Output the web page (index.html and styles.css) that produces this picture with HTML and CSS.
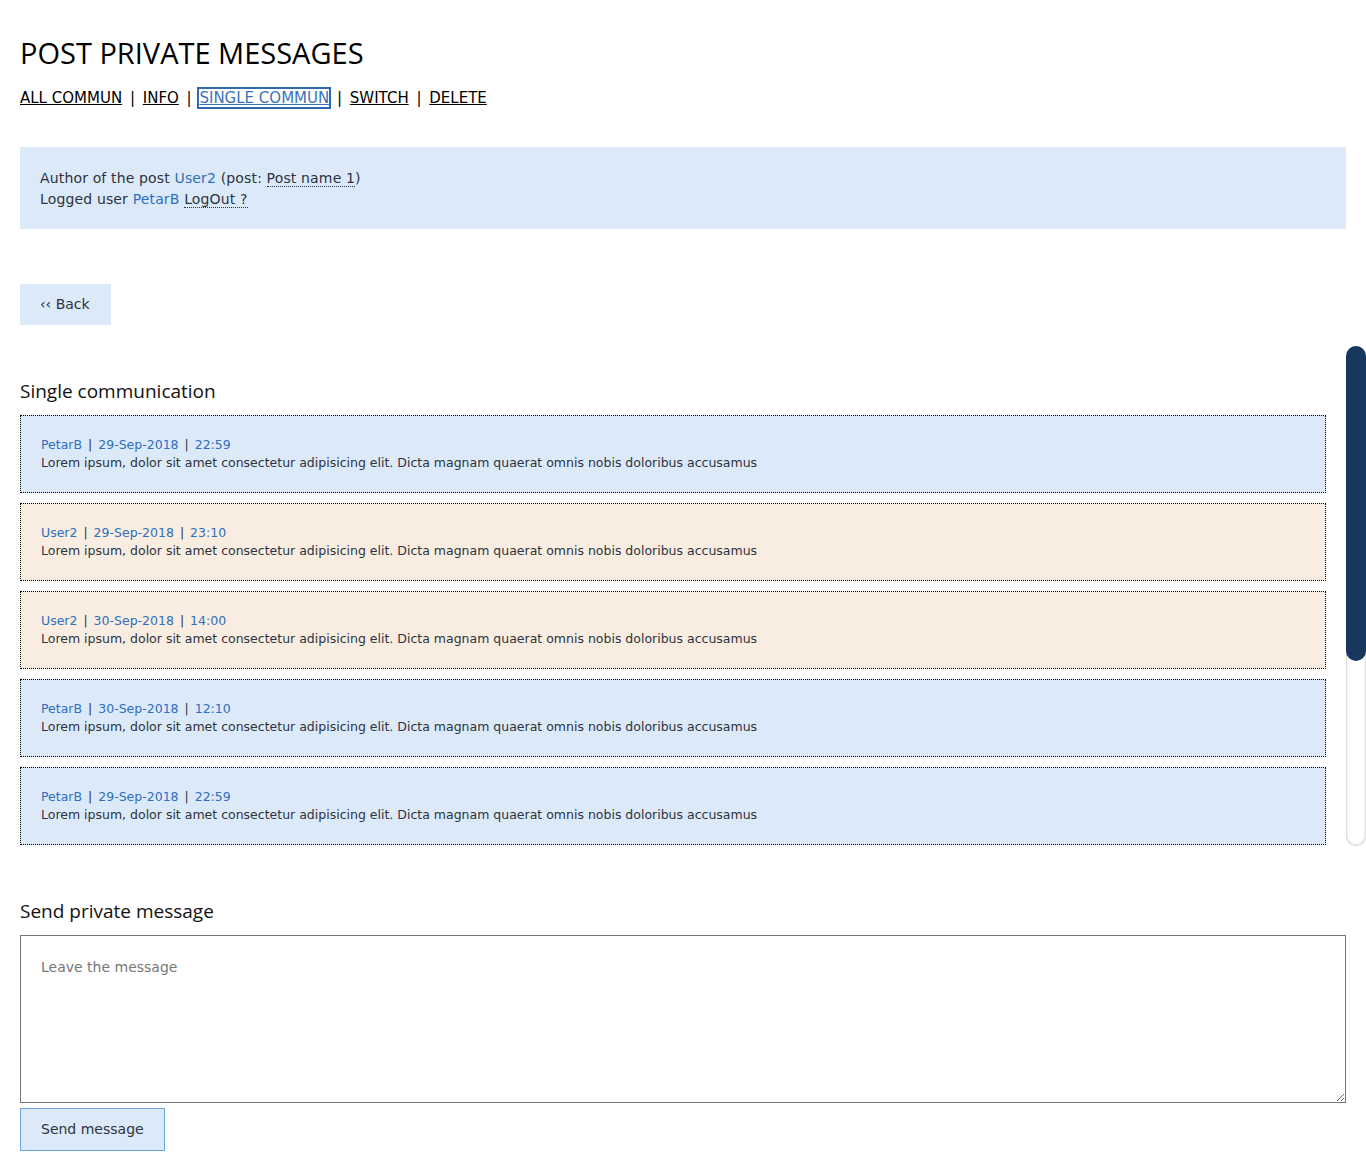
FILE: index.html
```html
<!DOCTYPE html>
<html lang="en">
<head>
<meta charset="utf-8">
<title>Post private messages</title>
<link rel="stylesheet" href="styles.css">
</head>
<body>
<header class="page-head">
  <h1 class="title">POST PRIVATE MESSAGES</h1>
  <nav class="nav">
    <a href="#" class="nav-link">ALL COMMUN</a> <span class="sep">|</span>
    <a href="#" class="nav-link">INFO</a> <span class="sep">|</span>
    <a href="#" class="nav-link nav-active">SINGLE COMMUN</a> <span class="sep">|</span>
    <a href="#" class="nav-link">SWITCH</a> <span class="sep">|</span>
    <a href="#" class="nav-link">DELETE</a>
  </nav>
</header>

<section class="info">
  <div>Author of the post <span class="user">User2</span> (post: <a href="#" class="dotted">Post name 1</a>)</div>
  <div>Logged user <span class="user">PetarB</span> <a href="#" class="dotted">LogOut ?</a></div>
</section>

<a href="#" class="btn-back">&lsaquo;&lsaquo; Back</a>

<div class="scroll-row">
  <section class="scroller">
    <h2 class="section-title">Single communication</h2>
    <div class="messages">
      <div class="msg msg-me">
        <div class="msg-head">PetarB <span class="bar">|</span> 29-Sep-2018 <span class="bar">|</span> 22:59</div>
        <div class="msg-body">Lorem ipsum, dolor sit amet consectetur adipisicing elit. Dicta magnam quaerat omnis nobis doloribus accusamus</div>
      </div>
      <div class="msg msg-other">
        <div class="msg-head">User2 <span class="bar">|</span> 29-Sep-2018 <span class="bar">|</span> 23:10</div>
        <div class="msg-body">Lorem ipsum, dolor sit amet consectetur adipisicing elit. Dicta magnam quaerat omnis nobis doloribus accusamus</div>
      </div>
      <div class="msg msg-other">
        <div class="msg-head">User2 <span class="bar">|</span> 30-Sep-2018 <span class="bar">|</span> 14:00</div>
        <div class="msg-body">Lorem ipsum, dolor sit amet consectetur adipisicing elit. Dicta magnam quaerat omnis nobis doloribus accusamus</div>
      </div>
      <div class="msg msg-me">
        <div class="msg-head">PetarB <span class="bar">|</span> 30-Sep-2018 <span class="bar">|</span> 12:10</div>
        <div class="msg-body">Lorem ipsum, dolor sit amet consectetur adipisicing elit. Dicta magnam quaerat omnis nobis doloribus accusamus</div>
      </div>
      <div class="msg msg-me">
        <div class="msg-head">PetarB <span class="bar">|</span> 29-Sep-2018 <span class="bar">|</span> 22:59</div>
        <div class="msg-body">Lorem ipsum, dolor sit amet consectetur adipisicing elit. Dicta magnam quaerat omnis nobis doloribus accusamus</div>
      </div>
      <div class="msg msg-other">
        <div class="msg-head">User2 <span class="bar">|</span> 30-Sep-2018 <span class="bar">|</span> 14:20</div>
        <div class="msg-body">Lorem ipsum, dolor sit amet consectetur adipisicing elit. Dicta magnam quaerat omnis nobis doloribus accusamus</div>
      </div>
      <div class="msg msg-me">
        <div class="msg-head">PetarB <span class="bar">|</span> 30-Sep-2018 <span class="bar">|</span> 15:05</div>
        <div class="msg-body">Lorem ipsum, dolor sit amet consectetur adipisicing elit. Dicta magnam quaerat omnis nobis doloribus accusamus</div>
      </div>
      <div class="msg msg-other">
        <div class="msg-head">User2 <span class="bar">|</span> 01-Oct-2018 <span class="bar">|</span> 09:15</div>
        <div class="msg-body">Lorem ipsum, dolor sit amet consectetur adipisicing elit. Dicta magnam quaerat omnis nobis doloribus accusamus</div>
      </div>
    </div>
  </section>
  <div class="scrollbar" aria-hidden="true">
    <div class="scrollbar-thumb"></div>
  </div>
</div>

<section class="send">
  <h2 class="section-title">Send private message</h2>
  <textarea class="message-input" placeholder="Leave the message"></textarea>
  <button class="btn-send" type="button">Send message</button>
</section>
</body>
</html>
```
FILE: styles.css
```css
html, body {
  margin: 0;
  padding: 0;
  background: #fff;
}
body {
  padding: 0 20px 20px 20px;
  font-family: "DejaVu Sans", Verdana, sans-serif;
  font-size: 14px;
  color: #2b3440;
}
.page-head {
  padding-top: 35px;
}
.title {
  margin: 0;
  font-family: "Open Sans", "Noto Sans", sans-serif;
  font-weight: 400;
  font-size: 29px;
  line-height: 36px;
  color: #000;
}
.nav {
  margin-top: 16px;
  font-family: "DejaVu Sans", sans-serif;
  font-size: 15px;
  line-height: 22px;
  color: #000;
}
.nav-link {
  color: #000;
  text-decoration: underline;
}
.nav-active {
  color: #3a73b8;
  outline: 2px solid #2f6ab0;
  outline-offset: 0;
}
.sep {
  margin: 0 3px;
}
.info {
  margin-top: 38px;
  background: #dce9f9;
  padding: 21px 20px 19px 20px;
  line-height: 21px;
  font-size: 14px;
  letter-spacing: 0.15px;
  color: #2b3440;
}
.user {
  color: #2e6fbf;
}
.dotted {
  color: #2b3440;
  text-decoration: none;
  border-bottom: 1px dotted #2b3440;
}
.btn-back {
  display: block;
  width: fit-content;
  margin-top: 55px;
  background: #dce9f9;
  padding: 10px 21px 10px 20px;
  line-height: 21px;
  font-size: 14px;
  color: #2b3440;
  text-decoration: none;
}
.scroll-row {
  display: flex;
  gap: 20px;
  margin-top: 21px;
  margin-right: -20px;
  height: 500px;
}
.scroller {
  flex: 1;
  min-width: 0;
  overflow: hidden;
  padding-top: 32px;
  box-sizing: border-box;
}
.scrollbar {
  width: 20px;
  height: 500px;
  box-sizing: border-box;
  border-radius: 10px;
  background: #fff;
  box-shadow: inset 0 0 3px rgba(0, 0, 0, 0.35);
  display: flex;
  flex-direction: column;
}
.scrollbar-thumb {
  height: 315px;
  border-radius: 10px;
  background: #17375e;
}
.section-title {
  margin: 0 0 10px 0;
  font-family: "Open Sans", "Noto Sans", sans-serif;
  font-weight: 400;
  font-size: 19px;
  line-height: 27px;
  color: #111;
}
.messages {
  display: flex;
  flex-direction: column;
  gap: 10px;
}
.msg {
  border: 1px dotted #000;
  padding: 20px;
  font-size: 12.5px;
  line-height: 18px;
}
.msg-me {
  background: #dce9f9;
}
.msg-other {
  background: #f9ede1;
}
.msg-head {
  color: #2e6fbf;
}
.bar {
  color: #2b3440;
  margin: 0 2px;
}
.msg-body {
  color: #2b3440;
}
.send {
  margin-top: 52px;
}
.message-input {
  display: block;
  width: 100%;
  height: 168px;
  box-sizing: border-box;
  border: 1px solid #767676;
  padding: 21px 20px 20px 20px;
  font-family: "DejaVu Sans", sans-serif;
  font-size: 14px;
  line-height: 21px;
  color: #2b3440;
  resize: vertical;
}
.message-input::placeholder {
  color: #777;
}
.btn-send {
  display: block;
  margin-top: 5px;
  background: #dce9f9;
  border: 1px solid #6fa4e3;
  padding: 10px 20px;
  font-family: "DejaVu Sans", sans-serif;
  font-size: 14px;
  line-height: 21px;
  color: #2b3440;
}
```
